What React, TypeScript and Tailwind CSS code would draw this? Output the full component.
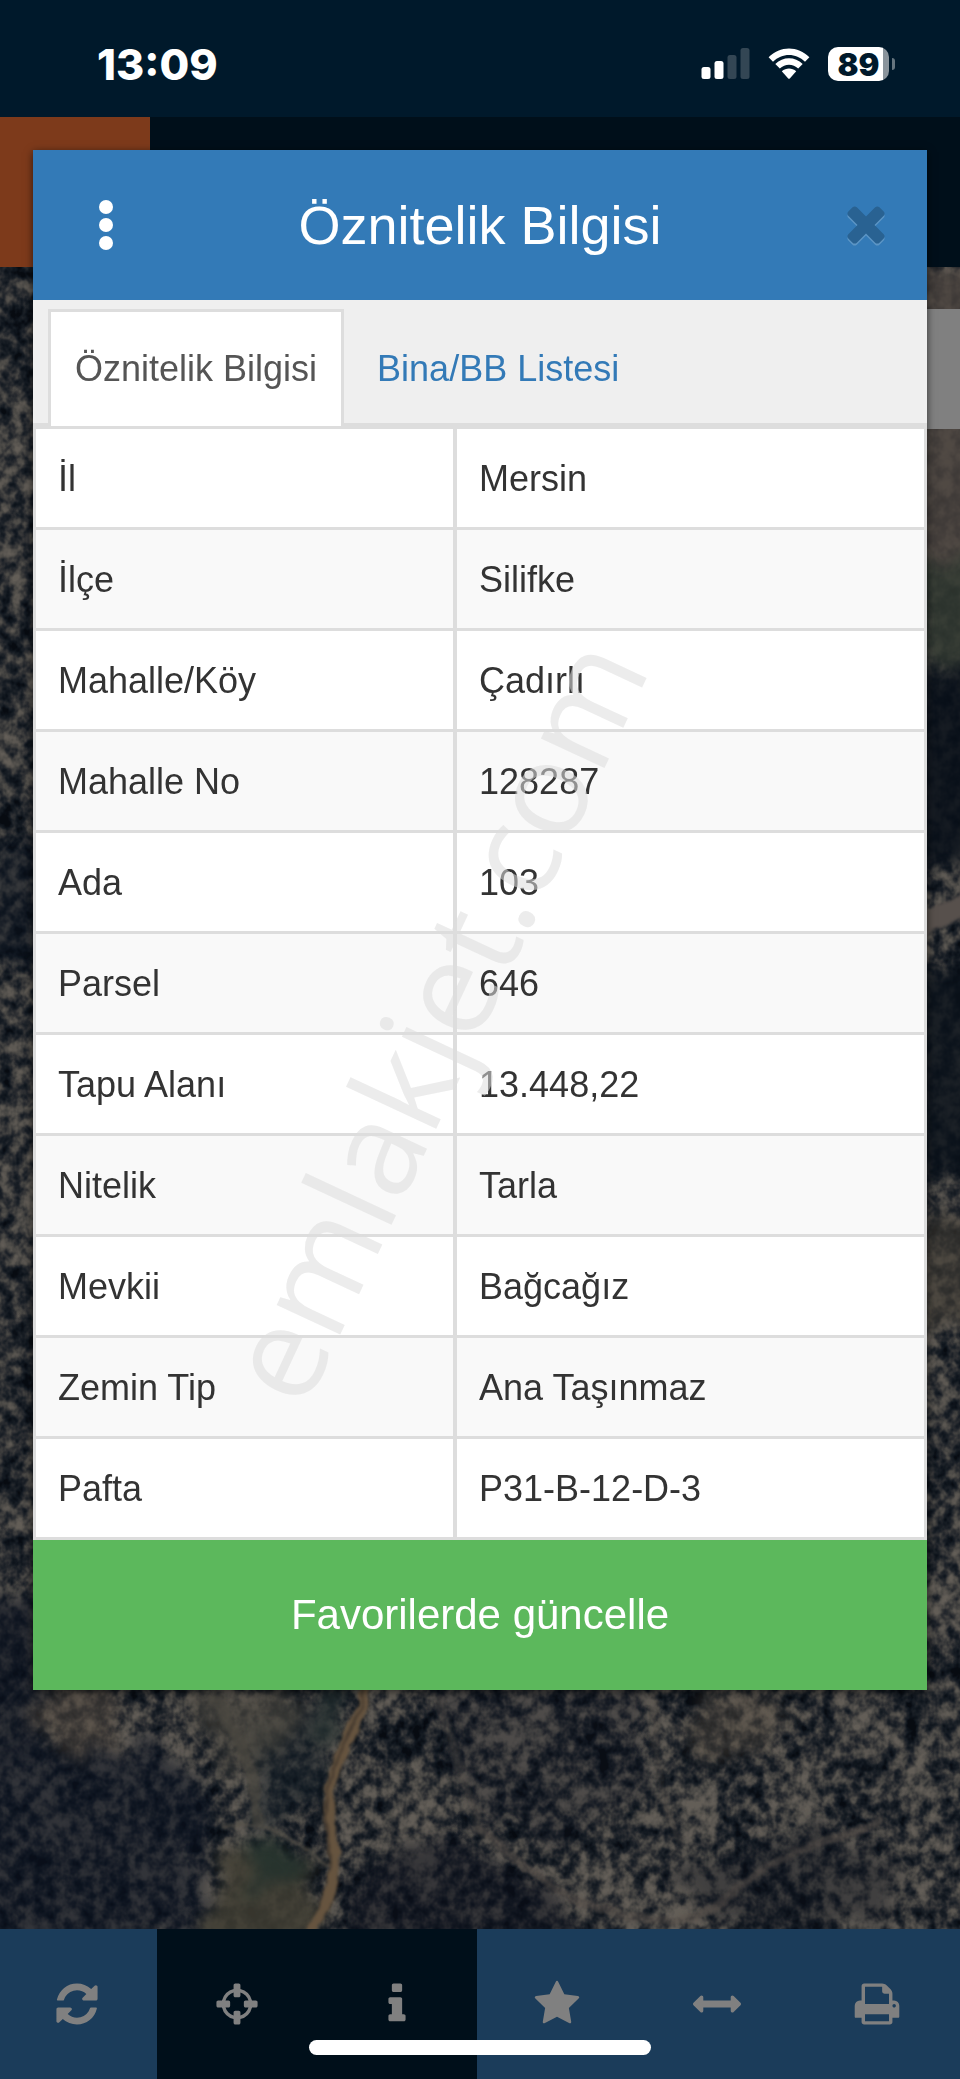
import React from "react";

const rows: [string, string][] = [
  ["İl", "Mersin"],
  ["İlçe", "Silifke"],
  ["Mahalle/Köy", "Çadırlı"],
  ["Mahalle No", "128287"],
  ["Ada", "103"],
  ["Parsel", "646"],
  ["Tapu Alanı", "13.448,22"],
  ["Nitelik", "Tarla"],
  ["Mevkii", "Bağcağız"],
  ["Zemin Tip", "Ana Taşınmaz"],
  ["Pafta", "P31-B-12-D-3"],
];

const icons = {
  refresh:
    "M1639 1056q0 5-1 7-64 268-268 434.500T892 1664q-146 0-282.500-55T366 1452l-129 129q-19 19-45 19t-45-19-19-45v-448q0-26 19-45t45-19h448q26 0 45 19t19 45-19 45l-137 137q71 66 161 102t187 36q134 0 250-65t186-179q11-17 53-117 8-23 30-23h192q13 0 22.500 9.500t9.500 22.500zm25-800v448q0 26-19 45t-45 19h-448q-26 0-45-19t-19-45 19-45l138-138Q1097 384 896 384q-134 0-250 65T460 628q-11 17-53 117-8 23-30 23H178q-13 0-22.500-9.500T146 736v-7q65-268 270-434.500T896 128q146 0 284 55.500T1425 340l130-129q19-19 45-19t45 19 19 45z",
  crosshairs:
    "M1325 1024h-109q-26 0-45-19t-19-45v-128q0-26 19-45t45-19h109q-32-108-112.500-188.500T1024 467v109q0 26-19 45t-45 19H832q-26 0-45-19t-19-45V467q-108 32-188.500 112.500T467 768h109q26 0 45 19t19 45v128q0 26-19 45t-45 19H467q32 108 112.500 188.500T768 1325v-109q0-26 19-45t45-19h128q26 0 45 19t19 45v109q108-32 188.500-112.500T1325 1024zm339-192v128q0 26-19 45t-45 19h-143q-37 161-154.500 278.500T1024 1457v143q0 26-19 45t-45 19H832q-26 0-45-19t-19-45v-143q-161-37-278.500-154.500T335 1024H192q-26 0-45-19t-19-45V832q0-26 19-45t45-19h143q37-161 154.500-278.500T768 335V192q0-26 19-45t45-19h128q26 0 45 19t19 45v143q161 37 278.500 154.500T1457 768h143q26 0 45 19t19 45z",
  info: "M1216 1344v128q0 26-19 45t-45 19H640q-26 0-45-19t-19-45v-128q0-26 19-45t45-19h64V896h-64q-26 0-45-19t-19-45V704q0-26 19-45t45-19h384q26 0 45 19t19 45v576h64q26 0 45 19t19 45zm-128-1152v192q0 26-19 45t-45 19H768q-26 0-45-19t-19-45V192q0-26 19-45t45-19h256q26 0 45 19t19 45z",
  star: "M1728 647q0 22-26 48l-363 354 86 500q1 7 1 20 0 21-10.500 35.500T1385 1619q-19 0-40-12l-449-236-449 236q-22 12-40 12-21 0-31.500-14.500T365 1569q0-6 2-20l86-500L89 695q-25-27-25-48 0-37 56-46l502-73L847 73q19-41 49-41t49 41l225 455 502 73q56 9 56 46z",
  arrows:
    "M1792 896q0 26-19 45l-256 256q-19 19-45 19t-45-19-19-45v-128H384v128q0 26-19 45t-45 19-45-19L19 941Q0 922 0 896t19-45l256-256q19-19 45-19t45 19 19 45v128h1024V640q0-26 19-45t45-19 45 19l256 256q19 19 19 45z",
  print:
    "M448 1536h896v-256H448v256zm0-640h896V512h-160q-40 0-68-28t-28-68V256H448v640zm1152 64q0-26-19-45t-45-19-45 19-19 45 19 45 45 19 45-19 19-45zm128 0v416q0 13-9.500 22.500t-22.500 9.500h-224v160q0 40-28 68t-68 28H416q-40 0-68-28t-28-68v-160H96q-13 0-22.500-9.500T64 1376V960q0-79 56.500-135.500T256 768h64V224q0-40 28-68t68-28h672q40 0 88 20t76 48l152 152q28 28 48 76t20 88v256h64q79 0 135.500 56.500T1728 960z",
  close:
    "M1490 1258q0 40-28 68l-136 136q-28 28-68 28t-68-28l-294-294-294 294q-28 28-68 28t-68-28l-136-136q-28-28-28-68t28-68l294-294-294-294q-28-28-28-68t28-68l136-136q28-28 68-28t68 28l294 294 294-294q28-28 68-28t68 28l136 136q28 28 28 68t-28 68l-294 294 294 294q28 28 28 68z",
};

function Icon({ d, className }: { d: string; className: string }) {
  return (
    <svg viewBox="0 0 1792 1792" className={className} fill="currentColor" aria-hidden="true">
      <path d={d} />
    </svg>
  );
}

const tools = [
  { label: "Yenile", d: icons.refresh, bg: "bg-[#1b3c5a]" },
  { label: "Konumum", d: icons.crosshairs, bg: "bg-[#000f1a]" },
  { label: "Bilgi", d: icons.info, bg: "bg-[#000f1a]" },
  { label: "Favoriler", d: icons.star, bg: "bg-[#1b3c5a]" },
  { label: "Ölçüm", d: icons.arrows, bg: "bg-[#1b3c5a]" },
  { label: "Yazdır", d: icons.print, bg: "bg-[#1b3c5a]" },
];

function StatusBar() {
  return (
    <div className="flex h-[117px] items-center justify-between bg-[#00192b] pr-[65px] pl-[97px] pt-[11px] text-white">
      <span className="font-[Inter,sans-serif] text-[43px] leading-none font-extrabold">13:09</span>
      <div className="flex items-center gap-[18px]">
        <svg width="49" height="32" viewBox="0 0 49 32" aria-hidden="true">
          <rect x="0.500" y="19" width="9" height="12" rx="2.500" fill="#fff" />
          <rect x="13.500" y="13" width="9" height="18" rx="2.500" fill="#fff" />
          <rect x="26.500" y="7" width="9" height="24" rx="2.500" fill="#334654" />
          <rect x="39.500" y="0" width="9" height="31" rx="2.500" fill="#334654" />
        </svg>
        <svg width="42" height="32" viewBox="0 0 42 32" aria-hidden="true">
          <path d="M0.600 9.200C12 -2.500 30 -2.500 41.400 9.200L37 13.800C28 4.700 14 4.700 5 13.800Z" fill="#fff" />
          <path d="M7.300 16C15 8.300 27 8.300 34.700 16L30.200 20.500C25 15.400 17 15.400 11.800 20.500Z" fill="#fff" />
          <path d="M13.800 23.200C18 19.600 24 19.600 28.200 23.200L21.800 30.400Q21 31.200 20.200 30.400Z" fill="#fff" />
        </svg>
        <div className="flex items-center gap-[3px]">
          <div className="flex h-[34px] w-[61px] items-center justify-center rounded-[10px] bg-[linear-gradient(to_right,#fff_55px,#8a949c_55px)]">
            <span className="font-[Inter,sans-serif] text-[31px] leading-none font-black text-[#00192b]">89</span>
          </div>
          <div className="h-3 w-[3px] rounded-r-full bg-[#66757f]" />
        </div>
      </div>
    </div>
  );
}

function SatelliteMap() {
  return (
    <svg
      className="absolute inset-0 h-full w-full bg-[#26282c]"
      viewBox="0 267 960 1662"
      preserveAspectRatio="xMidYMax slice"
      aria-hidden="true"
    >
      <defs>
        <filter id="scrub" x="0" y="0" width="100%" height="100%" colorInterpolationFilters="sRGB">
          <feTurbulence type="fractalNoise" baseFrequency="0.085 0.075" numOctaves="3" seed="11" />
          <feColorMatrix values="1 0 0 0 0  1 0 0 0 0  1 0 0 0 0  0 0 0 0 1" result="fine" />
          <feTurbulence type="fractalNoise" baseFrequency="0.018 0.014" numOctaves="3" seed="23" />
          <feColorMatrix values="1 0 0 0 0  1 0 0 0 0  1 0 0 0 0  0 0 0 0 1" result="coarse" />
          <feComposite in="fine" in2="coarse" operator="arithmetic" k1="0" k2="1.400" k3="0.900" k4="-0.640" />
          <feComponentTransfer>
            <feFuncR type="table" tableValues="0.030 0.060 0.110 0.190 0.280 0.350 0.390" />
            <feFuncG type="table" tableValues="0.045 0.085 0.130 0.195 0.275 0.335 0.370" />
            <feFuncB type="table" tableValues="0.070 0.115 0.155 0.205 0.265 0.315 0.345" />
          </feComponentTransfer>
        </filter>
        <filter id="rough" x="-20%" y="-20%" width="140%" height="140%" colorInterpolationFilters="sRGB">
          <feTurbulence type="fractalNoise" baseFrequency="0.030" numOctaves="4" seed="4" result="n" />
          <feDisplacementMap in="SourceGraphic" in2="n" scale="50" xChannelSelector="R" yChannelSelector="G" />
          <feGaussianBlur stdDeviation="7" />
        </filter>
        <filter id="track" x="-20%" y="-20%" width="140%" height="140%" colorInterpolationFilters="sRGB">
          <feTurbulence type="fractalNoise" baseFrequency="0.060" numOctaves="2" seed="2" result="n" />
          <feDisplacementMap in="SourceGraphic" in2="n" scale="8" xChannelSelector="R" yChannelSelector="G" />
          <feGaussianBlur stdDeviation="1.400" />
        </filter>
      </defs>
      <rect x="0" y="267" width="960" height="1662" filter="url(#scrub)" />
      <g filter="url(#rough)">
        <path d="M-40 1740L60 1755L150 1740L205 1790L200 1929L-40 1960Z" fill="#0b1320" opacity="0.550" />
        <path d="M240 1720L320 1700L330 1800L260 1830Z" fill="#131d26" opacity="0.500" />
        <path d="M430 1680L650 1680L640 1800L560 1850L470 1800Z" fill="#10131f" opacity="0.250" />
        <path d="M360 1860L480 1840L590 1929L340 1960Z" fill="#0b0f1b" opacity="0.500" />
        <path d="M670 1870L820 1830L900 1860L890 1915L720 1929Z" fill="#0c111b" opacity="0.400" />
        <path d="M180 1690L300 1690L290 1750L240 1780L200 1720Z" fill="#4a463f" opacity="0.650" />
        <path d="M40 1690L115 1690L120 1745L70 1760L35 1730Z" fill="#54493f" opacity="0.500" />
        <path d="M700 1690L790 1700L770 1760L690 1750Z" fill="#5a5043" opacity="0.400" />
        <path d="M215 1850L320 1850L310 1960L195 1960Z" fill="#3f3d32" opacity="0.850" />
        <path d="M250 1840L310 1850L300 1890L255 1885Z" fill="#26332d" opacity="0.900" />
        <path d="M310 1680L355 1680L335 1745L318 1740Z" fill="#24302f" opacity="0.800" />
        <path d="M910 267L980 267L980 560L910 560Z" fill="#4b433e" opacity="0.800" />
        <path d="M915 560L980 560L980 660L915 660Z" fill="#333a31" opacity="0.850" />
        <path d="M910 670L980 660L980 860L910 870Z" fill="#080f19" opacity="0.850" />
        <path d="M910 970L980 960L980 1170L910 1180Z" fill="#0a121a" opacity="0.800" />
        <path d="M915 1220L980 1220L980 1330L915 1330Z" fill="#423d36" opacity="0.600" />
        <path d="M-20 1590L40 1590L40 1760L-20 1760Z" fill="#0b1320" opacity="0.600" />
        <path d="M-20 840L40 840L40 960L-20 960Z" fill="#0b1320" opacity="0.500" />
      </g>
      <g fill="none" filter="url(#track)" strokeLinecap="round">
        <path d="M368 1680C358 1730 330 1765 329 1800S338 1850 333 1880S318 1915 308 1940" stroke="#66543f" strokeWidth="11" />
        <path d="M364 1690C356 1730 328 1765 326 1805S334 1850 330 1870" stroke="#3f352c" strokeWidth="2" />
        <path d="M215 1700C240 1740 255 1770 258 1820" stroke="#4a4740" strokeWidth="11" opacity="0.700" />
        <path d="M225 1825C260 1820 290 1835 328 1865" stroke="#57524a" strokeWidth="4" opacity="0.700" />
        <path d="M480 1830C530 1870 560 1905 640 1918S720 1890 780 1860S850 1840 880 1820" stroke="#57504a" strokeWidth="8" opacity="0.500" />
        <path d="M440 1700C450 1750 470 1790 480 1830" stroke="#57504a" strokeWidth="8" opacity="0.350" />
        <path d="M655 1690C650 1750 660 1800 680 1840" stroke="#57504a" strokeWidth="7" opacity="0.300" />
        <path d="M915 930C935 915 945 920 975 895" stroke="#57504c" strokeWidth="20" />
      </g>
    </svg>
  );
}

export default function App() {
  return (
    <div className="relative flex min-h-screen flex-col overflow-hidden bg-[#000f1a] font-['Liberation_Sans',Arial,sans-serif]">
      <StatusBar />
      <header className="h-[150px] bg-[#000f1a]">
        <div className="h-full w-[150px] bg-[#7d3a1b]" />
      </header>

      <main className="relative flex-1">
        <SatelliteMap />
        <div className="absolute top-[42px] right-0 h-[120px] w-20 bg-[#808080]" />

        <section
          role="dialog"
          aria-labelledby="dialog-title"
          className="relative mx-[33px] -mt-[117px] mb-56 bg-white shadow-[0_2px_8px_rgba(0,0,0,0.6)]"
        >
          <div className="flex h-[150px] items-center justify-between bg-[#337ab7] px-[33px]">
            <button type="button" aria-label="Menü" className="flex h-20 w-20 items-center justify-center">
              <svg width="14" height="50" viewBox="0 0 14 50" fill="#fff" aria-hidden="true">
                <circle cx="7" cy="7" r="7" />
                <circle cx="7" cy="25" r="7" />
                <circle cx="7" cy="43" r="7" />
              </svg>
            </button>
            <h1 id="dialog-title" className="text-[54px] leading-none text-white">
              Öznitelik Bilgisi
            </h1>
            <button type="button" aria-label="Kapat" className="flex h-20 w-20 items-center justify-end">
              <Icon d={icons.close} className="size-14 text-[#296292] drop-shadow-[0_2px_0_#5c95c5]" />
            </button>
          </div>

          <div role="tablist" className="flex h-[126px] items-end border-b-[3px] border-[#ddd] bg-[#efefef] pl-[15px]">
            <button
              type="button"
              role="tab"
              aria-selected="true"
              className="-mb-[3px] h-[117px] border-[3px] border-b-0 border-[#ddd] bg-white px-6 text-4xl text-[#555]"
            >
              Öznitelik Bilgisi
            </button>
            <button
              type="button"
              role="tab"
              aria-selected="false"
              className="-mb-[3px] h-[117px] border-[3px] border-b-0 border-transparent px-[30px] text-4xl text-[#337ab7]"
            >
              Bina/BB Listesi
            </button>
          </div>

          <table className="w-full table-fixed border-collapse border-[3px] border-[#ddd] text-4xl text-[#333]">
            <tbody>
              {rows.map(([name, value]) => (
                <tr key={name} className="h-[101px] border-b-[3px] border-[#ddd] odd:bg-white even:bg-[#f9f9f9]">
                  <th scope="row" className="w-[47.2%] border-r-4 border-[#ddd] pt-0.5 pl-[22px] text-left font-normal">
                    {name}
                  </th>
                  <td className="pt-0.5 pl-[22px]">{value}</td>
                </tr>
              ))}
            </tbody>
          </table>

          <button type="button" className="block h-[150px] w-full bg-[#5cb85c] text-[42px] leading-none text-white">
            Favorilerde güncelle
          </button>
        </section>
      </main>

      <nav className="overflow-hidden bg-[#1b3c5a]">
        <div className="mr-[3px] -ml-[3px] grid h-[150px] grid-cols-6">
          {tools.map((tool) => (
            <button
              key={tool.label}
              type="button"
              aria-label={tool.label}
              className={`flex items-center justify-center text-[#808080] ${tool.bg}`}
            >
              <Icon d={tool.d} className="size-12" />
            </button>
          ))}
        </div>
      </nav>

      <div className="absolute bottom-6 left-1/2 h-[15px] w-[342px] -translate-x-1/2 rounded-full bg-white" />

      <div className="pointer-events-none absolute inset-0 flex items-center justify-center pr-24 pb-[42px]">
        <span className="-rotate-[65deg] font-['Open_Sans',sans-serif] text-[131px] leading-none whitespace-nowrap text-[#dcdcdc]/55">
          emlakjet.com
        </span>
      </div>
    </div>
  );
}
